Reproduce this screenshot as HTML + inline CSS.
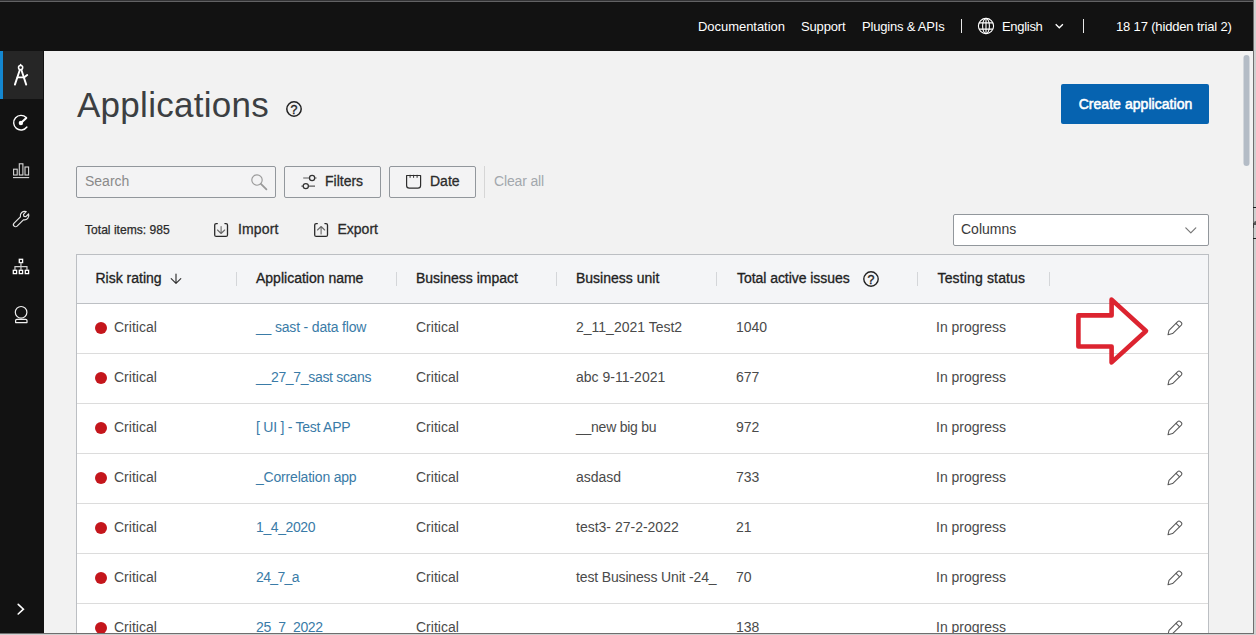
<!DOCTYPE html>
<html lang="en">
<head>
<meta charset="utf-8">
<title>Applications</title>
<style>
*{box-sizing:border-box;margin:0;padding:0}
html,body{width:1256px;height:635px;overflow:hidden;background:#d0d0d0}
body{font-family:"Liberation Sans",sans-serif;font-size:14px;color:#323232;position:relative}
.abs{position:absolute}
#frame{position:absolute;left:0;top:0;width:1253px;height:633px;background:#f2f2f2;overflow:hidden}
#edge{position:absolute;left:0;top:0;width:1254px;height:634px;background:#6e6e6e}
#topbar{position:absolute;left:0;top:0;width:1253px;height:51px;background:#121212;color:#fff}
#topbar span{position:absolute;top:19px;font-size:13px;line-height:16px;white-space:nowrap;color:#fff}
.vsep{position:absolute;top:19px;width:1px;height:14px;background:#e8e8e8}
#sidebar{position:absolute;left:0;top:50px;width:44px;height:585px;background:#121212}
#sb-active{position:absolute;left:0;top:1px;width:43px;height:48px;background:#262626}
#sb-active i{position:absolute;left:0;top:0;width:3px;height:48px;background:#1487d0}
.sbi{position:absolute;left:10px;width:22px;height:22px}
.sbi svg{display:block}
h1{position:absolute;left:77px;top:83px;font-size:35px;line-height:44px;font-weight:400;color:#3c3f42;letter-spacing:0.28px;white-space:nowrap}
#create{position:absolute;left:1061px;top:84px;width:148px;height:40px;background:#0663b0;color:#fff;font-weight:400;font-size:14px;line-height:40px;text-align:center;border-radius:2px;white-space:nowrap;-webkit-text-stroke:0.55px #fff;letter-spacing:0.05px;padding-left:1px}
.box{position:absolute;border:1px solid #92979c;background:#f3f3f4;border-radius:2px}
.btnlabel{position:absolute;font-size:14px;line-height:16px;color:#2b2b2b;white-space:nowrap;-webkit-text-stroke:0.3px #2b2b2b}
.t{position:absolute;white-space:nowrap;line-height:16px}
#table{position:absolute;left:76px;top:254px;width:1133px;height:400px;background:#fff;border:1px solid #bcbfc3}
#thead{position:absolute;left:0;top:0;width:1131px;height:49px;background:#f4f5f7;border-bottom:1px solid #bdc0c4}
.th{position:absolute;top:15px;font-size:14px;line-height:16px;color:#222;white-space:nowrap;-webkit-text-stroke:0.3px #222}
.cs{position:absolute;top:17px;width:1px;height:14px;background:#d4d6d9}
.row{position:absolute;left:0;width:1131px;height:50px;border-bottom:1px solid #dcdcdc}
.row span{position:absolute;top:15px;font-size:14px;line-height:16px;color:#4a4a4a;white-space:nowrap}
.row span.lnk{color:#3a7ba7}
.row i{position:absolute;left:18px;top:18px;width:12px;height:12px;border-radius:50%;background:#c4161c}
.row svg{position:absolute;left:1089.5px;top:16px}
</style>
</head>
<body>
<div id="edge"></div>
<div class="abs" style="left:1253px;top:207px;width:3px;height:1px;background:#1c1c1c"></div>
<div class="abs" style="left:1253px;top:238px;width:3px;height:1px;background:#1c1c1c"></div>
<div class="abs" style="left:1254px;top:221px;width:2px;height:4px;background:#555;border-radius:2px 0 0 0"></div>
<div class="abs" style="left:1253px;top:223px;width:1px;height:5px;background:#3c3c3c"></div>
<div id="frame">
  <div id="topbar">
    <div class="abs" style="left:0;top:0;width:1253px;height:1px;background:#333335"></div>
    <div class="abs" style="left:0;top:1px;width:1253px;height:1px;background:#626264"></div>
    <span style="left:698px;letter-spacing:-0.04px">Documentation</span>
    <span style="left:801px;letter-spacing:-0.15px">Support</span>
    <span style="left:862px;letter-spacing:-0.2px">Plugins &amp; APIs</span>
    <div class="vsep" style="left:961px"></div>
    <span style="left:1002px;letter-spacing:-0.3px">English</span>
    <svg class="abs" style="left:970px;top:10px" width="100" height="32" viewBox="970 10 100 32" fill="none" stroke="#fff" stroke-width="1.1">
      <circle cx="986" cy="26" r="7.6"/>
      <ellipse cx="986" cy="26" rx="3.4" ry="7.6"/>
      <path d="M986 18.4 V33.6 M979 22.9 H993 M979 29.1 H993"/>
      <path d="M1055.7 24.2 L1059.3 27.8 L1062.9 24.2" stroke-width="1.3"/>
    </svg>
    <div class="vsep" style="left:1083px"></div>
    <span style="left:1116px;letter-spacing:-0.16px">18 17 (hidden trial 2)</span>
  </div>
  <div id="sidebar">
    <div id="sb-active"><i></i></div>
    <svg class="abs" style="left:0;top:0" width="44" height="585" viewBox="0 50 44 585" fill="none" stroke="#fff" stroke-linecap="round" stroke-linejoin="round">
      <g stroke-width="1.9">
        <circle cx="20.6" cy="67.6" r="2.1" stroke-width="1.5"/>
        <path d="M20.6 65 V64.6" stroke-width="1.6"/>
        <path d="M19.7 70.2 L14.9 84.6"/>
        <path d="M21.5 70.2 L26.2 84.6"/>
        <path d="M17.6 77.4 H24 L27.2 75"/>
      </g>
      <g stroke-width="1.4">
        <path d="M26.2 117.6 A7.3 7.3 0 1 0 26.9 127"/>
        <path d="M20.9 123 L26.3 117.9" stroke-width="2"/>
        <circle cx="20.9" cy="123" r="2.2" fill="#fff" stroke="none"/>
      </g>
      <g stroke-width="1.1" stroke="#d8d8d8" stroke-linecap="butt" stroke-linejoin="miter">
        <rect x="13.6" y="169.2" width="3.6" height="5.8"/>
        <rect x="19.3" y="163.8" width="3.6" height="11.2"/>
        <rect x="25" y="167" width="3.6" height="8"/>
        <path d="M13 177.6 H29.2"/>
      </g>
      <g stroke-width="1.2" stroke="#e6e6e6">
        <path d="M14.1 223.1 L20.4 216.8 A4.4 4.4 0 0 1 26.2 211.6 L23.5 214.3 L23.9 216.3 L25.9 216.7 L28.6 214 A4.4 4.4 0 0 1 23.4 219.8 L17.1 226.1 A2.1 2.1 0 0 1 14.1 223.1 Z"/>
      </g>
      <g stroke-width="1.3" stroke-linecap="butt" stroke-linejoin="miter">
        <rect x="19.3" y="259.3" width="3.3" height="3.3"/>
        <rect x="13.3" y="270.3" width="3.3" height="3.3"/>
        <rect x="19.3" y="270.3" width="3.3" height="3.3"/>
        <rect x="25.3" y="270.3" width="3.3" height="3.3"/>
        <path d="M20.95 262.6 V270.3 M14.95 270.3 V266.7 H26.95 V270.3" stroke="#cfcfcf" stroke-width="1.2"/>
      </g>
      <g stroke-width="1.2" stroke="#f0f0f0">
        <circle cx="21.1" cy="312.3" r="5.8"/>
        <path d="M15.6 322.6 V320.6 Q15.6 319.4 16.8 319.4 H25.8 Q27 319.4 27 320.6 V322.6 Z"/>
      </g>
      <path d="M18.2 604.4 L23.4 609.2 L18.2 614" stroke-width="1.6" stroke-linejoin="miter"/>
    </svg>
  </div>
  <h1>Applications</h1>
  <div id="create">Create application</div>

  <div class="box" style="left:76px;top:166px;width:200px;height:32px"></div>
  <div class="t" style="left:85px;top:173px;color:#8a8a8a;font-size:14px">Search</div>
  <div class="box" style="left:284px;top:166px;width:97px;height:32px"></div>
  <div class="btnlabel" style="left:325px;top:173px">Filters</div>
  <div class="box" style="left:389px;top:166px;width:87px;height:32px"></div>
  <div class="btnlabel" style="left:430px;top:173px">Date</div>
  <div class="abs" style="left:484px;top:166px;width:1px;height:32px;background:#d6d6d6"></div>
  <div class="t" style="left:494px;top:173px;color:#a3a8ad;font-size:14px;letter-spacing:-0.15px">Clear all</div>

  <div class="t" style="left:85px;top:222px;font-size:12.1px;color:#2b2b2b;-webkit-text-stroke:0.25px #2b2b2b">Total items: 985</div>
  <div class="btnlabel" style="left:238px;top:221px;letter-spacing:0.15px">Import</div>
  <div class="btnlabel" style="left:337.5px;top:221px">Export</div>

  <div class="box" style="left:953px;top:214px;width:256px;height:32px;background:#fff"></div>
  <div class="t" style="left:961px;top:221px;font-size:14px;color:#3a3a3a">Columns</div>

  <div id="table">
    <div id="thead">
      <div class="th" style="left:18.5px">Risk rating</div>
      <div class="cs" style="left:159px"></div>
      <div class="th" style="left:179px">Application name</div>
      <div class="cs" style="left:319px"></div>
      <div class="th" style="left:339px">Business impact</div>
      <div class="cs" style="left:479px"></div>
      <div class="th" style="left:499px">Business unit</div>
      <div class="cs" style="left:639px"></div>
      <div class="th" style="left:660px;letter-spacing:-0.05px">Total active issues</div>
      <div class="cs" style="left:840px"></div>
      <div class="th" style="left:860.5px;letter-spacing:0.15px">Testing status</div>
      <div class="cs" style="left:972px"></div>
    </div>
    <div class="row" style="top:49px"><i></i><span style="left:37px">Critical</span><span class="lnk" style="left:179px;letter-spacing:-0.18px">__ sast - data flow</span><span style="left:339px">Critical</span><span style="left:499px">2_11_2021 Test2</span><span style="left:659px">1040</span><span style="left:859px">In progress</span><svg width="16" height="16" viewBox="0 0 16 16" fill="none" stroke="#585858" stroke-width="1.05" stroke-linejoin="round" stroke-linecap="round"><path d="M1 14.8 L2 10.3 L10.7 1.6 Q12 0.5 13.3 1.6 L14.4 2.7 Q15.4 3.9 14.3 5.2 L5.6 13.6 Z"/><path d="M9.1 3.3 L12.4 6.6"/></svg></div>
    <div class="row" style="top:99px"><i></i><span style="left:37px">Critical</span><span class="lnk" style="left:179px;letter-spacing:-0.32px">__27_7_sast scans</span><span style="left:339px">Critical</span><span style="left:499px">abc 9-11-2021</span><span style="left:659px">677</span><span style="left:859px">In progress</span><svg width="16" height="16" viewBox="0 0 16 16" fill="none" stroke="#585858" stroke-width="1.05" stroke-linejoin="round" stroke-linecap="round"><path d="M1 14.8 L2 10.3 L10.7 1.6 Q12 0.5 13.3 1.6 L14.4 2.7 Q15.4 3.9 14.3 5.2 L5.6 13.6 Z"/><path d="M9.1 3.3 L12.4 6.6"/></svg></div>
    <div class="row" style="top:149px"><i></i><span style="left:37px">Critical</span><span class="lnk" style="left:179px;letter-spacing:-0.25px">[ UI ] - Test APP</span><span style="left:339px">Critical</span><span style="left:499px;letter-spacing:-0.25px">__new big bu</span><span style="left:659px">972</span><span style="left:859px">In progress</span><svg width="16" height="16" viewBox="0 0 16 16" fill="none" stroke="#585858" stroke-width="1.05" stroke-linejoin="round" stroke-linecap="round"><path d="M1 14.8 L2 10.3 L10.7 1.6 Q12 0.5 13.3 1.6 L14.4 2.7 Q15.4 3.9 14.3 5.2 L5.6 13.6 Z"/><path d="M9.1 3.3 L12.4 6.6"/></svg></div>
    <div class="row" style="top:199px"><i></i><span style="left:37px">Critical</span><span class="lnk" style="left:179px;letter-spacing:-0.19px">_Correlation app</span><span style="left:339px">Critical</span><span style="left:499px">asdasd</span><span style="left:659px">733</span><span style="left:859px">In progress</span><svg width="16" height="16" viewBox="0 0 16 16" fill="none" stroke="#585858" stroke-width="1.05" stroke-linejoin="round" stroke-linecap="round"><path d="M1 14.8 L2 10.3 L10.7 1.6 Q12 0.5 13.3 1.6 L14.4 2.7 Q15.4 3.9 14.3 5.2 L5.6 13.6 Z"/><path d="M9.1 3.3 L12.4 6.6"/></svg></div>
    <div class="row" style="top:249px"><i></i><span style="left:37px">Critical</span><span class="lnk" style="left:179px;letter-spacing:-0.4px">1_4_2020</span><span style="left:339px">Critical</span><span style="left:499px">test3- 27-2-2022</span><span style="left:659px">21</span><span style="left:859px">In progress</span><svg width="16" height="16" viewBox="0 0 16 16" fill="none" stroke="#585858" stroke-width="1.05" stroke-linejoin="round" stroke-linecap="round"><path d="M1 14.8 L2 10.3 L10.7 1.6 Q12 0.5 13.3 1.6 L14.4 2.7 Q15.4 3.9 14.3 5.2 L5.6 13.6 Z"/><path d="M9.1 3.3 L12.4 6.6"/></svg></div>
    <div class="row" style="top:299px"><i></i><span style="left:37px">Critical</span><span class="lnk" style="left:179px;letter-spacing:-0.65px">24_7_a</span><span style="left:339px">Critical</span><span style="left:499px;letter-spacing:-0.15px">test Business Unit -24_</span><span style="left:659px">70</span><span style="left:859px">In progress</span><svg width="16" height="16" viewBox="0 0 16 16" fill="none" stroke="#585858" stroke-width="1.05" stroke-linejoin="round" stroke-linecap="round"><path d="M1 14.8 L2 10.3 L10.7 1.6 Q12 0.5 13.3 1.6 L14.4 2.7 Q15.4 3.9 14.3 5.2 L5.6 13.6 Z"/><path d="M9.1 3.3 L12.4 6.6"/></svg></div>
    <div class="row" style="top:349px"><i></i><span style="left:37px">Critical</span><span class="lnk" style="left:179px;letter-spacing:-0.39px">25_7_2022</span><span style="left:339px">Critical</span><span style="left:499px"></span><span style="left:659px">138</span><span style="left:859px">In progress</span><svg width="16" height="16" viewBox="0 0 16 16" fill="none" stroke="#585858" stroke-width="1.05" stroke-linejoin="round" stroke-linecap="round"><path d="M1 14.8 L2 10.3 L10.7 1.6 Q12 0.5 13.3 1.6 L14.4 2.7 Q15.4 3.9 14.3 5.2 L5.6 13.6 Z"/><path d="M9.1 3.3 L12.4 6.6"/></svg></div>
  </div>
<svg class="abs" style="left:0;top:0;pointer-events:none" width="1253" height="633" viewBox="0 0 1253 633" fill="none" stroke-linecap="round" stroke-linejoin="round">
    <!-- title help -->
    <circle cx="294" cy="109" r="7.2" stroke="#222" stroke-width="1.5"/>
    <text x="294" y="113.5" text-anchor="middle" font-family="Liberation Sans, sans-serif" font-size="12.4" font-weight="400" fill="#222" stroke="#222" stroke-width="0.35">?</text>
    <!-- search -->
    <g stroke="#9a9a9a" stroke-width="1.3">
      <circle cx="257" cy="180" r="5.2" stroke-width="1.15"/>
      <path d="M260.9 183.9 L266.4 189.4" stroke-width="1.8"/>
    </g>
    <!-- filters -->
    <g stroke="#333" stroke-width="1.25">
      <path d="M303.2 178 H309.4 M315 178 H316.6 M301.4 186.1 H302.9 M308.7 186.1 H315" stroke="#5a5a5a" stroke-width="1.15" stroke-linecap="butt"/>
      <circle cx="312.1" cy="178" r="2.6"/>
      <circle cx="305.8" cy="186.1" r="2.6"/>
    </g>
    <!-- date -->
    <g stroke="#2e2e2e" stroke-width="1.2">
      <path d="M406.6 175.5 H420.6 V185.4 Q420.6 188.1 417.9 188.1 H409.3 Q406.6 188.1 406.6 185.4 Z"/>
      <path d="M410.1 174.8 V177.8 M413.6 174.8 V177.8 M417.1 174.8 V177.8" stroke-width="1" stroke-linecap="butt"/>
    </g>
    <!-- import -->
    <g stroke="#2a2a2a" stroke-width="1.3">
      <path d="M217.3 223.6 H216.2 Q214.7 223.6 214.7 225.1 V234.9 Q214.7 236.4 216.2 236.4 H226 Q227.5 236.4 227.5 234.9 V225.1 Q227.5 223.6 226 223.6 H224.9"/>
      <path d="M221.1 226.5 V233.2 M217.5 230 L221.1 233.5 L224.7 230" stroke="#6a6a6a" stroke-width="1.1"/>
    </g>
    <!-- export -->
    <g stroke="#2a2a2a" stroke-width="1.3">
      <path d="M317.3 223.6 H316.2 Q314.7 223.6 314.7 225.1 V234.9 Q314.7 236.4 316.2 236.4 H326 Q327.5 236.4 327.5 234.9 V225.1 Q327.5 223.6 326 223.6 H324.9"/>
      <path d="M321.1 234 V226.8 M317.5 230 L321.1 226.5 L324.7 230" stroke="#6a6a6a" stroke-width="1.1"/>
    </g>
    <!-- columns chevron -->
    <path d="M1185.8 227.8 L1190.8 232.8 L1195.8 227.8" stroke="#777" stroke-width="1.2"/>
    <!-- sort arrow -->
    <path d="M176 274 V283 M171.2 278.6 L176 283.3 L180.8 278.6" stroke="#303030" stroke-width="1.15"/>
    <!-- header help -->
    <circle cx="871" cy="279" r="7.2" stroke="#222" stroke-width="1.4"/>
    <text x="871" y="283.5" text-anchor="middle" font-family="Liberation Sans, sans-serif" font-size="12.4" font-weight="400" fill="#222" stroke="#222" stroke-width="0.35">?</text>
    <!-- red arrow annotation -->
    <path d="M1078.4 315.4 H1111.6 V299.6 L1146 331 L1111.6 362.4 V346.5 H1078.4 Z" stroke="#dc2430" stroke-width="4.6" stroke-linejoin="round"/>
    <!-- scrollbar thumb -->
    <rect x="1243.5" y="55" width="6" height="111" rx="3" fill="#b4bcc6" stroke="none"/>
  </svg>
</div>
</body>
</html>
